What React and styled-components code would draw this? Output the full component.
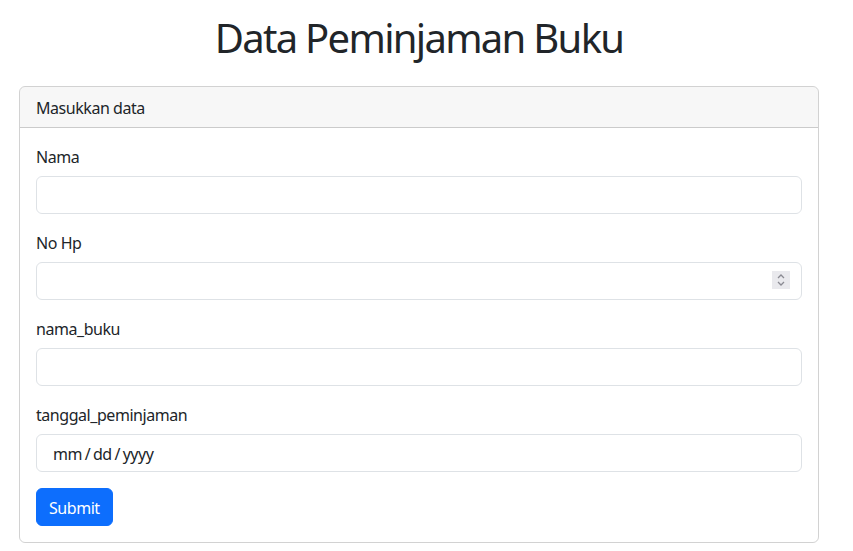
import React from 'react';
import styled, { createGlobalStyle } from 'styled-components';

const GlobalStyle = createGlobalStyle`
  * {
    box-sizing: border-box;
  }

  body {
    margin: 0;
    background: #fff;
    color: #212529;
    font-family: 'Noto Sans', 'Open Sans', sans-serif;
    font-size: 16px;
    line-height: 1.5;
    letter-spacing: -0.45px;
  }
`;

// the original had a 15px scrollbar, so content is centred in 838px
const Page = styled.div`
  width: 838px;
  padding-top: 14px;
`;

const Title = styled.h1`
  margin: 0 0 24px;
  text-align: center;
  font-size: 40px;
  font-weight: 400;
  line-height: 48px;
  letter-spacing: -1.7px;
`;

const Card = styled.div`
  width: 800px;
  margin: 0 auto;
  border: 1px solid rgba(0, 0, 0, 0.175);
  border-radius: 6px;
  overflow: hidden;
`;

const CardHeader = styled.div`
  padding: 9px 16px 7px;
  background: rgba(0, 0, 0, 0.03);
  border-bottom: 1px solid rgba(0, 0, 0, 0.175);
`;

const CardBody = styled.form`
  padding: 16px;
`;

const Field = styled.div`
  margin-bottom: 16px;
`;

const Label = styled.label`
  display: block;
  padding-top: 1px;
  margin-bottom: 7px;
`;

const InputWrap = styled.div`
  position: relative;
`;

const Input = styled.input`
  display: block;
  width: 100%;
  height: 38px;
  padding: 6px 12px;
  font: inherit;
  color: #212529;
  background: #fff;
  border: 1px solid #dee2e6;
  border-radius: 6px;
  outline: none;
  appearance: none;

  &::-webkit-inner-spin-button,
  &::-webkit-outer-spin-button {
    -webkit-appearance: none;
    margin: 0;
  }
`;

const DateBox = styled.div`
  height: 38px;
  padding: 7px 12px 5px 16px;
  border: 1px solid #dee2e6;
  border-radius: 6px;
  word-spacing: -1px;
`;

const Spinner = styled.div`
  position: absolute;
  top: 9px;
  right: 12px;
  width: 18px;
  height: 18px;
  background: #e9e9ed;
  display: flex;
  align-items: center;
  justify-content: center;
`;

const Button = styled.button`
  height: 38px;
  padding: 7px 12px 5px;
  font: inherit;
  letter-spacing: -0.45px;
  color: #fff;
  background: #0d6efd;
  border: 1px solid #0d6efd;
  border-radius: 6px;
`;

const fields = [
  { id: 'nama', label: 'Nama', type: 'text' },
  { id: 'nohp', label: 'No Hp', type: 'number' },
  { id: 'nama_buku', label: 'nama_buku', type: 'text' },
];

export default function App() {
  return (
    <>
      <GlobalStyle />
      <Page>
        <Title>Data Peminjaman Buku</Title>
        <Card>
          <CardHeader>Masukkan data</CardHeader>
          <CardBody onSubmit={(e) => e.preventDefault()}>
            {fields.map((f) => (
              <Field key={f.id}>
                <Label htmlFor={f.id}>{f.label}</Label>
                <InputWrap>
                  <Input id={f.id} type={f.type} />
                  {f.type === 'number' && (
                    <Spinner>
                      <svg width="10" height="14" viewBox="0 0 10 14" fill="none" stroke="#8a8a92" strokeWidth="1.3">
                        <path d="M2 5 L5 2 L8 5" />
                        <path d="M2 9 L5 12 L8 9" />
                      </svg>
                    </Spinner>
                  )}
                </InputWrap>
              </Field>
            ))}
            <Field>
              <Label>tanggal_peminjaman</Label>
              <DateBox>mm / dd / yyyy</DateBox>
            </Field>
            <Button type="submit">Submit</Button>
          </CardBody>
        </Card>
      </Page>
    </>
  );
}
